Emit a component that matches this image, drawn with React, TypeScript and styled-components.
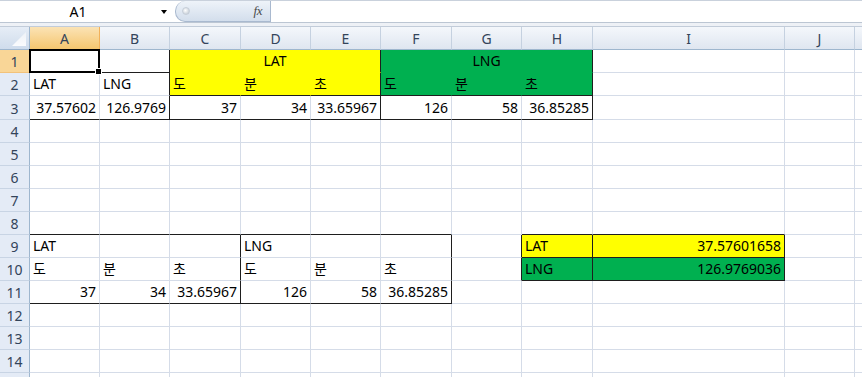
import React from 'react';
import styled, { createGlobalStyle } from 'styled-components';

const GRID = '#d5dce8';
const DARK = '#1e1e1e';
const YELLOW = '#ffff00';
const GREEN = '#00b050';

const COLS = ['A', 'B', 'C', 'D', 'E', 'F', 'G', 'H', 'I', 'J', 'K'];
const WIDTHS = [70, 70, 71, 70, 70, 71, 70, 71, 192, 70, 80];
const ROW_HEIGHTS = [23, 23, 24, 23, 23, 23, 23, 23, 23, 23, 23, 23, 23, 23, 23];
const ROWS = ROW_HEIGHTS.map((_, i) => i + 1);
const LAST_LABEL = 14;

type Align = 'left' | 'right' | 'center';
type CellData = { text?: string; align?: Align; fill?: string; span?: number };

const data: Record<string, CellData> = {
  A2: { text: 'LAT' },
  B2: { text: 'LNG' },
  A3: { text: '37.57602', align: 'right' },
  B3: { text: '126.9769', align: 'right' },
  C1: { text: 'LAT', align: 'center', fill: YELLOW, span: 3 },
  F1: { text: 'LNG', align: 'center', fill: GREEN, span: 3 },
  C2: { text: '도', fill: YELLOW },
  D2: { text: '분', fill: YELLOW },
  E2: { text: '초', fill: YELLOW },
  F2: { text: '도', fill: GREEN },
  G2: { text: '분', fill: GREEN },
  H2: { text: '초', fill: GREEN },
  C3: { text: '37', align: 'right' },
  D3: { text: '34', align: 'right' },
  E3: { text: '33.65967', align: 'right' },
  F3: { text: '126', align: 'right' },
  G3: { text: '58', align: 'right' },
  H3: { text: '36.85285', align: 'right' },
  A9: { text: 'LAT' },
  D9: { text: 'LNG' },
  A10: { text: '도' },
  B10: { text: '분' },
  C10: { text: '초' },
  D10: { text: '도' },
  E10: { text: '분' },
  F10: { text: '초' },
  A11: { text: '37', align: 'right' },
  B11: { text: '34', align: 'right' },
  C11: { text: '33.65967', align: 'right' },
  D11: { text: '126', align: 'right' },
  E11: { text: '58', align: 'right' },
  F11: { text: '36.85285', align: 'right' },
  H9: { text: 'LAT', fill: YELLOW },
  I9: { text: '37.57601658', align: 'right', fill: YELLOW },
  H10: { text: 'LNG', fill: GREEN },
  I10: { text: '126.9769036', align: 'right', fill: GREEN },
};

// cells hidden under a merge
const covered = new Set(['D1', 'E1', 'G1', 'H1']);

// thin black borders: right / bottom edge of a cell
const darkR = new Set<string>();
const darkB = new Set<string>();
const box = (r1: number, c1: string, r2: number, c2: string) => {
  const a = COLS.indexOf(c1);
  const b = COLS.indexOf(c2);
  for (let c = a; c <= b; c++) {
    if (r1 > 1) darkB.add(COLS[c] + (r1 - 1));
    darkB.add(COLS[c] + r2);
  }
  for (let r = r1; r <= r2; r++) {
    if (a > 0) darkR.add(COLS[a - 1] + r);
    darkR.add(COLS[b] + r);
  }
};
box(1, 'A', 1, 'B');
box(1, 'A', 3, 'B');
box(1, 'C', 3, 'E');
box(1, 'F', 3, 'H');
box(1, 'C', 2, 'H');
box(9, 'A', 11, 'F');
box(9, 'A', 11, 'C');
box(9, 'H', 10, 'I');
box(9, 'H', 9, 'I');
box(9, 'H', 10, 'H');

const justify = { left: 'flex-start', right: 'flex-end', center: 'center' };

const GlobalStyle = createGlobalStyle`
  body {
    margin: 0;
    background: #fff;
    font-family: "Noto Sans", "Noto Sans CJK KR", sans-serif;
  }
`;

const Window = styled.div`
  width: 862px;
  height: 377px;
  overflow: hidden;
  background: #fff;
`;

const TopBar = styled.div`
  box-sizing: border-box;
  height: 23px;
  display: flex;
  align-items: stretch;
  border-top: 1px solid #c9d1dc;
  border-bottom: 1px solid #bcc6d3;
`;

const NameBox = styled.div`
  width: 172px;
  display: flex;
  align-items: center;
`;

const NameText = styled.div`
  flex: 1;
  text-align: center;
  font-size: 14px;
  color: #000;
`;

const DropArrow = styled.div`
  width: 16px;
  display: flex;
  justify-content: center;
  &::before {
    content: '';
    border-left: 3.5px solid transparent;
    border-right: 3.5px solid transparent;
    border-top: 4px solid #000;
  }
`;

const FxPill = styled.div`
  box-sizing: border-box;
  margin-left: 3px;
  width: 96px;
  display: flex;
  align-items: center;
  justify-content: space-between;
  padding: 0 8px 0 6px;
  border: 1px solid #a9b9cf;
  border-top: none;
  border-radius: 10px 0 0 10px;
  background: linear-gradient(#eef3f9, #d3deec);
`;

const Knob = styled.span`
  width: 6px;
  height: 6px;
  border-radius: 50%;
  background: radial-gradient(circle at 40% 40%, #fff, #b9c3cf);
  border: 1px solid #c6ced8;
`;

const Fx = styled.span`
  font-family: "Liberation Serif", serif;
  font-style: italic;
  font-size: 13px;
  color: #4a4a4a;
  letter-spacing: -0.5px;
`;

const FormulaInput = styled.div`
  flex: 1;
  background: #fff;
`;

const Divider = styled.div`
  height: 3px;
  background: #eef1f6;
  border-bottom: 1px solid #c2ccd9;
`;

const Sheet = styled.div`
  display: grid;
  grid-template-columns: 30px ${WIDTHS.map((w) => `${w}px`).join(' ')};
  grid-template-rows: 23px ${ROW_HEIGHTS.map((h) => `${h}px`).join(' ')};
`;

const Head = styled.div`
  box-sizing: border-box;
  display: flex;
  align-items: center;
  justify-content: center;
  font-size: 14px;
  color: #33445a;
`;

const Corner = styled(Head)`
  background: linear-gradient(#e6edf6, #cfdcec);
  border-right: 1px solid #9eb6ce;
  border-bottom: 1px solid #9eb6ce;
  svg {
    display: block;
  }
`;

const ColHead = styled(Head)<{ $active?: boolean }>`
  background: ${(p) =>
    p.$active ? 'linear-gradient(#fbe3b5, #f5c66f)' : 'linear-gradient(#f4f7fb, #dfe6f0)'};
  border-right: 1px solid ${(p) => (p.$active ? '#f2b15a' : '#c5d1e0')};
  border-bottom: 1px solid ${(p) => (p.$active ? '#f29b3c' : '#9eb6ce')};
`;

const RowHead = styled(Head)<{ $active?: boolean }>`
  background: ${(p) => (p.$active ? '#f9d697' : '#e4ebf6')};
  border-right: 1px solid ${(p) => (p.$active ? '#f29b3c' : '#9eb6ce')};
  border-bottom: 1px solid ${(p) => (p.$active ? '#f2c27a' : '#c8d4e4')};
  padding-top: 1px;
`;

const Cell = styled.div<{
  $span: number;
  $fill?: string;
  $align: Align;
  $darkR: boolean;
  $darkB: boolean;
}>`
  position: relative;
  box-sizing: border-box;
  grid-column: span ${(p) => p.$span};
  display: flex;
  align-items: flex-end;
  justify-content: ${(p) => justify[p.$align]};
  padding: 0 3px 1px;
  background: ${(p) => p.$fill ?? '#fff'};
  border-right: 1px solid ${(p) => (p.$darkR ? DARK : p.$fill ?? GRID)};
  border-bottom: 1px solid ${(p) => (p.$darkB ? DARK : p.$fill ?? GRID)};
  font-size: 14px;
  line-height: 20px;
  color: #000;
  white-space: nowrap;
`;

const Selection = styled.div`
  position: absolute;
  top: -1px;
  left: -1px;
  right: -1px;
  bottom: -1px;
  border: 2px solid #000;
  pointer-events: none;
  z-index: 2;
`;

const FillHandle = styled.div`
  position: absolute;
  right: -4px;
  bottom: -4px;
  width: 5px;
  height: 5px;
  background: #000;
  border: 1px solid #fff;
`;

const App = () => {
  return (
    <Window>
      <GlobalStyle />
      <TopBar>
        <NameBox>
          <NameText>A1</NameText>
          <DropArrow />
        </NameBox>
        <FxPill>
          <Knob />
          <Fx>fx</Fx>
        </FxPill>
        <FormulaInput />
      </TopBar>
      <Divider />
      <Sheet>
        <Corner>
          <svg width="29" height="22" viewBox="0 0 29 22">
            <defs>
              <linearGradient id="tri" x1="0" y1="0" x2="0" y2="1">
                <stop offset="0" stopColor="#eef2f7" />
                <stop offset="1" stopColor="#fafbfd" />
              </linearGradient>
            </defs>
            <polygon points="26,5 26,19 12,19" fill="url(#tri)" />
          </svg>
        </Corner>
        {COLS.map((c) => (
          <ColHead key={c} $active={c === 'A'}>
            {c === 'K' ? '' : c}
          </ColHead>
        ))}
        {ROWS.map((r) => (
          <React.Fragment key={r}>
            <RowHead $active={r === 1}>{r <= LAST_LABEL ? r : ''}</RowHead>
            {COLS.map((c, i) => {
              const id = c + r;
              if (covered.has(id)) return null;
              const d = data[id] ?? {};
              const span = d.span ?? 1;
              const last = COLS[i + span - 1];
              const bottom = COLS.slice(i, i + span).some((k) => darkB.has(k + r));
              return (
                <Cell
                  key={id}
                  $span={span}
                  $fill={d.fill}
                  $align={d.align ?? 'left'}
                  $darkR={darkR.has(last + r)}
                  $darkB={bottom}
                >
                  {d.text}
                  {id === 'A1' && (
                    <Selection>
                      <FillHandle />
                    </Selection>
                  )}
                </Cell>
              );
            })}
          </React.Fragment>
        ))}
      </Sheet>
    </Window>
  );
};

export default App;
